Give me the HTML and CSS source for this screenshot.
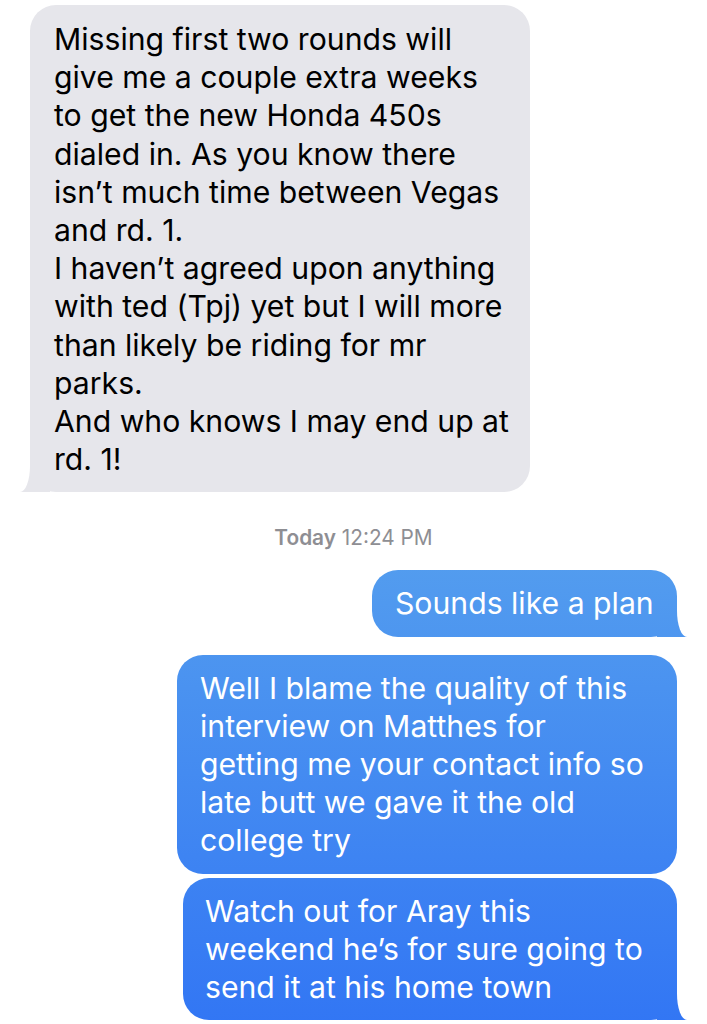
FILE: index.html
```html
<!DOCTYPE html>
<html lang="en">
<head>
  <meta charset="UTF-8">
  <meta name="viewport" content="width=device-width, initial-scale=1.0">
  <title>Messages</title>
  <link rel="stylesheet" href="styles.css">
</head>
<body>
  <div class="thread">
    <div class="bubble incoming tail">
      Missing first two rounds will<br>
      give me a couple extra weeks<br>
      to get the new Honda 450s<br>
      dialed in. As you know there<br>
      isn’t much time between Vegas<br>
      and rd. 1.<br>
      I haven’t agreed upon anything<br>
      with ted (Tpj) yet but I will more<br>
      than likely be riding for mr<br>
      parks.<br>
      And who knows I may end up at<br>
      rd. 1!
    </div>

    <div class="stamp"><b>Today</b> 12:24 PM</div>

    <div class="bubble outgoing tail short">Sounds like a plan</div>
    <div class="bubble outgoing wide">
      Well I blame the quality of this<br>
      interview on Matthes for<br>
      getting me your contact info so<br>
      late butt we gave it the old<br>
      college try
    </div>
    <div class="bubble outgoing tail last">
      Watch out for Aray this<br>
      weekend he’s for sure going to<br>
      send it at his home town
    </div>
  </div>
</body>
</html>
```

FILE: styles.css
```css
body {
  margin: 0;
  background-color: #fff;
  font-family: Inter, "Noto Sans", sans-serif;
}

.thread {
  display: flex;
  flex-direction: column;
  padding: 5px 30px 0;
}

.bubble {
  position: relative;
  box-sizing: border-box;
  font-size: 30.2px;
  line-height: 38.2px;
  border-radius: 26px;
  white-space: nowrap;
}

/* grey, from the other person */
.incoming {
  align-self: flex-start;
  width: 500px;
  padding: 15px 24px 14px;
  background-color: #e6e6eb;
  color: #000;
}

/* blue, mine - gradient follows the screen like iOS does */
.outgoing {
  align-self: flex-end;
  padding: 14px 23px;
  color: #fff;
  background: linear-gradient(to bottom, #56a0ee 520px, #3276f4 1024px) fixed;
}
.short { width: 305px; margin-bottom: 18px; }
.wide { width: 500px; margin-bottom: 4px; }
.last { width: 494px; padding-left: 22px; }

.stamp {
  align-self: center;
  margin: 33px 0 19px;
  font-size: 20.8px;
  line-height: 26px;
  color: #8e8e93;
}
.stamp b {
  font-weight: 600;
}

/* tails */
.tail::before,
.tail::after {
  content: "";
  position: absolute;
  bottom: 0;
}
.incoming.tail::before {
  left: -10px;
  width: 30px;
  height: 26px;
  background: inherit;
}
.incoming.tail::after {
  right: 100%;
  width: 14px;
  height: 26px;
  background-color: #fff;
  border-bottom-right-radius: 10px 26px;
}
.outgoing.tail::before {
  right: -10px;
  width: 30px;
  height: 26px;
  background: inherit;
}
.outgoing.tail::after {
  left: 100%;
  width: 14px;
  height: 26px;
  background-color: #fff;
  border-bottom-left-radius: 10px 26px;
}
```
